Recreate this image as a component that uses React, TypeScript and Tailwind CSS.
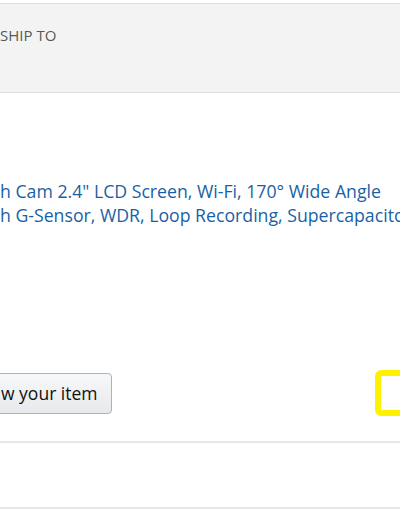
export default function App() {
  return (
    <div className="w-[400px] h-[516px] overflow-hidden bg-white font-['Open_Sans',sans-serif]">
      <div className="h-[3px]" />
      <div className="h-[90px] border-y border-[#dddddd] bg-[#f3f3f3] pt-[21px]">
        <p className="text-[15px] leading-[20px] text-[#565959] whitespace-nowrap">SHIP TO</p>
      </div>

      <div className="pt-[86px] text-[17.7px] leading-[24px] text-[#1a5fa6] whitespace-nowrap">
        <p>h Cam 2.4" LCD Screen, Wi-Fi, 170° Wide Angle</p>
        <p>h G-Sensor, WDR, Loop Recording, Supercapacitor</p>
      </div>

      <div className="mt-[143px] flex items-center justify-between">
        <button className="-ml-[20px] h-[41px] rounded-[4px] border border-[#adb1b8] bg-gradient-to-b from-[#f7f8fa] to-[#e7e9ec] pl-[20px] pr-[13px] text-[17.5px] text-[#111111] whitespace-nowrap">
          w your item
        </button>
        <div className="-mr-[20px] h-[46px] w-[45px] rounded-[6px] border-[6px] border-[#fff200]" />
      </div>

      <div className="mt-[25px] h-[68px] border-y-2 border-[#e7e7e7]" />
    </div>
  );
}
